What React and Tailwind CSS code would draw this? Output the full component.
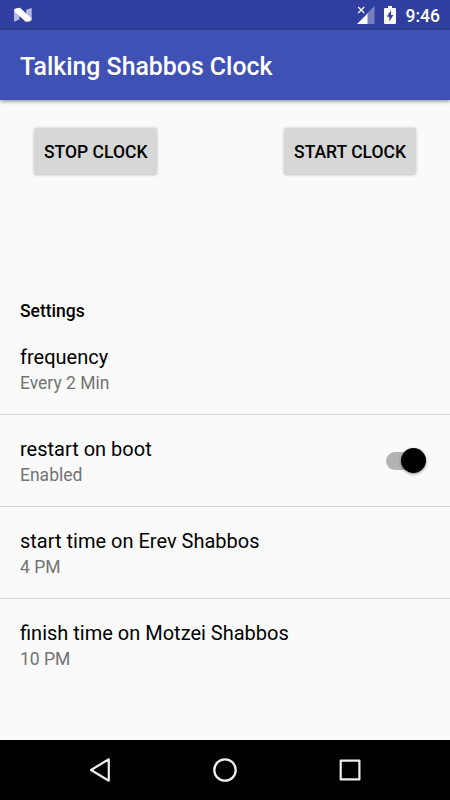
const preferences = [
    { title: 'frequency', summary: 'Every 2 Min' },
    { title: 'restart on boot', summary: 'Enabled', enabled: true },
    { title: 'start time on Erev Shabbos', summary: '4 PM' },
    { title: 'finish time on Motzei Shabbos', summary: '10 PM' },
];

const NougatIcon = () => (
    <svg width="20" height="16" viewBox="0 0 20 16">
        <path d="M1 2.5L6.5 7V12.4L1 14.8Z" fill="#b5bae0" />
        <path d="M18.7 .9V13L13.2 8V2.7Z" fill="#b5bae0" />
        <path d="M1.2 2.6Q2.5 .9 7 .8L18.4 11.2V13.2Q16.8 15 12.7 14.8L1.2 4.2Z" fill="#fff" />
    </svg>
);

const SignalIcon = () => (
    <svg width="18" height="18" viewBox="0 0 18 18">
        <path d="M17.5 0V18H9V8.5Z" fill="#7780bf" />
        <path d="M10.5 7.5V18H0Z" fill="#fff" />
        <path d="M1.2 1L7.2 7M7.2 1L1.2 7" stroke="#fff" strokeWidth="1.2" />
    </svg>
);

const BatteryIcon = () => (
    <svg width="12" height="18" viewBox="0 0 12 18">
        <path d="M4 0H8V2H11Q12 2 12 3V17Q12 18 11 18H1Q0 18 0 17V3Q0 2 1 2H4Z" fill="#fff" />
        <path d="M7 4.3L2.8 10.7H5.3V15.6L9.4 8.9H7Z" fill="#303f9f" />
    </svg>
);

const StatusBar = () => (
    <div className="flex h-[30px] items-center bg-[#303f9f] pl-[13px] pr-[10px] text-white">
        <div className="flex-1">
            <NougatIcon />
        </div>
        <SignalIcon />
        <div className="ml-[9px] mr-px">
            <BatteryIcon />
        </div>
        <span className="ml-[9px] pt-px text-[17.5px] font-medium leading-[30px]">9:46</span>
    </div>
);

const ClockButton = ({ children }) => (
    <button className="h-[46px] rounded-[2.5px] bg-[#d6d7d7] px-[10px] pt-px text-[17.5px] font-medium leading-5 text-black shadow-[0_0.5px_3px_rgba(0,0,0,0.25)]">
        {children}
    </button>
);

const Switch = () => (
    <div className="flex h-[18px] w-10 items-center justify-end rounded-l-full bg-linear-to-r from-[#b3b3b3] from-70% to-transparent to-70%">
        <div className="size-[25px] shrink-0 rounded-full bg-black shadow-[0_1px_3px_rgba(0,0,0,0.45)]" />
    </div>
);

const NavigationBar = () => (
    <div className="flex h-[60px] items-center justify-between bg-black px-[87px]">
        <svg width="26" height="26" viewBox="0 0 26 26" fill="none" stroke="#eee" strokeWidth="2.2" strokeLinejoin="round">
            <path d="M21.8 2.3V23.7L4 13Z" />
        </svg>
        <svg width="26" height="26" viewBox="0 0 26 26" fill="none" stroke="#eee" strokeWidth="2.3">
            <circle cx="13" cy="13" r="10.7" />
        </svg>
        <svg width="26" height="26" viewBox="0 0 26 26" fill="none" stroke="#eee" strokeWidth="2.2" strokeLinejoin="round">
            <rect x="3.7" y="3.7" width="18.7" height="18.7" />
        </svg>
    </div>
);

const App = () => {
    return (
        <div className="flex h-[800px] w-[450px] flex-col overflow-hidden bg-[#fafafa] font-['Roboto',sans-serif] text-black">
            <StatusBar />

            <header className="flex h-[70px] shrink-0 items-center bg-[#3f51b5] px-5 pt-[4px] shadow-[0_1px_4px_rgba(0,0,0,0.5)]">
                <h1 className="text-[24.85px] font-medium leading-[30px] text-white">Talking Shabbos Clock</h1>
            </header>

            <main className="flex flex-1 flex-col">
                <div className="flex justify-between pl-[34px] pr-[34px] pt-7">
                    <ClockButton>STOP CLOCK</ClockButton>
                    <ClockButton>START CLOCK</ClockButton>
                </div>

                <h2 className="mt-[126px] h-[23px] px-5 text-[17.5px] font-medium leading-[22px]">Settings</h2>

                <ul className="divide-y divide-[#d4d4d4]">
                    {preferences.map((pref) => (
                        <li key={pref.title} className="flex h-[92px] items-center justify-between pl-5 pr-6">
                            <div className="pt-px">
                                <div className="text-xl leading-[26px]">{pref.title}</div>
                                <div className="pt-px text-[17.5px] leading-6 text-[#737373]">{pref.summary}</div>
                            </div>
                            {pref.enabled && <Switch />}
                        </li>
                    ))}
                </ul>
            </main>

            <NavigationBar />
        </div>
    );
};

export default App;
